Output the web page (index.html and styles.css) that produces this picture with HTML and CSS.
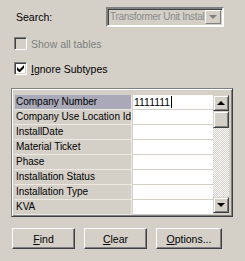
FILE: index.html
```html
<!DOCTYPE html>
<html lang="en">
<head>
<meta charset="UTF-8">
<title>Search</title>
<link rel="stylesheet" href="styles.css">
</head>
<body>

<div class="dialog">
  <div class="search-row">
    <span class="search-label">Search:</span>
    <div class="combo disabled">
      <span class="combo-text">Transformer Unit Instal</span>
      <span class="combo-btn"><span class="arrow-down"></span></span>
    </div>
  </div>

  <label class="check disabled"><span class="box"></span>Show all tables</label>
  <label class="check"><span class="box">
    <svg width="7" height="7" viewBox="0 0 7 7"><path d="M0 2v3l2 2h1l4-4V0L2.5 4.5z" fill="#000"/></svg>
  </span><span><u>I</u>gnore Subtypes</span></label>

  <div class="panel">
    <div class="grid">
      <div class="rows">
        <div class="row selected"><div class="name">Company Number</div><div class="value">1111111<span class="caret"></span></div></div>
        <div class="row"><div class="name">Company Use Location Id</div><div class="value"></div></div>
        <div class="row"><div class="name">InstallDate</div><div class="value"></div></div>
        <div class="row"><div class="name">Material Ticket</div><div class="value"></div></div>
        <div class="row"><div class="name">Phase</div><div class="value"></div></div>
        <div class="row"><div class="name">Installation Status</div><div class="value"></div></div>
        <div class="row"><div class="name">Installation Type</div><div class="value"></div></div>
        <div class="row"><div class="name">KVA</div><div class="value"></div></div>
      </div>
      <div class="scrollbar">
        <div class="sb-btn"><span class="arrow-up"></span></div>
        <div class="sb-thumb"></div>
        <div class="sb-track"></div>
        <div class="sb-btn"><span class="arrow-down"></span></div>
      </div>
    </div>
  </div>

  <div class="buttons">
    <button class="btn"><u>F</u>ind</button>
    <button class="btn"><u>C</u>lear</button>
    <button class="btn"><u>O</u>ptions...</button>
  </div>
</div>

</body>
</html>
```

FILE: styles.css
```css
/* classic dialog look */
body {
  margin: 0;
  background: #d4d0c8;
  font-family: "Liberation Sans", Arial, sans-serif;
  font-size: 10.5px;
  color: #000;
}

.dialog {
  width: 245px;
  height: 261px;
  padding: 7px 0 0 0;
  box-sizing: border-box;
}

.search-row {
  display: flex;
  align-items: center;
  height: 20px;
}

.search-label {
  margin-left: 16px;
  width: 90px;
}

.combo {
  display: flex;
  width: 118px;
  height: 20px;
  box-sizing: border-box;
  border: 2px solid;
  border-color: #808080 #ffffff #ffffff #808080;
  box-shadow: inset 1px 1px 0 #404040;
  background: #d4d0c8;
  color: #8a8a8a;
}

.combo-text {
  flex: 1;
  padding: 2px 0 0 2px;
  font-size: 10px;
  letter-spacing: -0.3px;
  white-space: nowrap;
  overflow: hidden;
}

.combo-btn {
  width: 16px;
  margin: 1px 1px 1px 0;
  box-sizing: border-box;
  border: 1px solid;
  border-color: #ffffff #808080 #808080 #ffffff;
  display: flex;
  align-items: center;
  justify-content: center;
}

.combo-btn .arrow-down {
  border-top-color: #808080;
}

.arrow-down {
  width: 0;
  height: 0;
  border-left: 4px solid transparent;
  border-right: 4px solid transparent;
  border-top: 4px solid #000;
}

.arrow-up {
  width: 0;
  height: 0;
  border-left: 4px solid transparent;
  border-right: 4px solid transparent;
  border-bottom: 4px solid #000;
}

.check {
  display: flex;
  align-items: center;
  margin-left: 14px;
  height: 13px;
}

.check.disabled {
  margin-top: 10px;
  color: #808080;
}

.check + .check {
  margin-top: 12px;
}

.box {
  width: 13px;
  height: 13px;
  box-sizing: border-box;
  border: 1px solid;
  border-color: #808080 #ffffff #ffffff #808080;
  box-shadow: inset 1px 1px 0 #404040, inset -1px -1px 0 #d4d0c8;
  background: #fff;
  margin-right: 4px;
  display: flex;
  align-items: center;
  justify-content: center;
}

.check.disabled .box {
  background: #d4d0c8;
}

.panel {
  margin: 13px 0 0 11px;
  width: 222px;
  height: 129px;
  box-sizing: border-box;
  border: 1px solid;
  border-color: #808080 #404040 #404040 #808080;
  box-shadow: inset 1px 1px 0 #ffffff, inset -1px -1px 0 #808080;
  padding: 6px 3px 0 3px;
}

.grid {
  display: flex;
  height: 118px;
}

.rows {
  width: 199px;
}

.row {
  display: flex;
  height: 15px;
}

.name {
  width: 117px;
  padding-left: 1px;
  box-sizing: border-box;
  border-bottom: 1px solid #ece9e2;
  border-right: 1px solid #ece9e2;
  line-height: 14px;
  font-size: 10px;
  white-space: nowrap;
  overflow: hidden;
}

.row.selected .name {
  background: #a9a9b8;
}

.value {
  flex: 1;
  background: #fff;
  border-bottom: 1px solid #d4d0c8;
  margin-left: 1px;
  line-height: 14px;
  padding-left: 1px;
  display: flex;
  align-items: center;
}

.caret {
  width: 1px;
  height: 12px;
  background: #000;
  margin-left: 1px;
}

.scrollbar {
  width: 16px;
  display: flex;
  flex-direction: column;
}

.sb-btn, .sb-thumb {
  height: 16px;
  box-sizing: border-box;
  background: #d4d0c8;
  border: 1px solid;
  border-color: #d4d0c8 #404040 #404040 #d4d0c8;
  box-shadow: inset 1px 1px 0 #ffffff, inset -1px -1px 0 #808080;
  display: flex;
  align-items: center;
  justify-content: center;
}

.sb-thumb {
  height: 17px;
}

.sb-track {
  flex: 1;
  background: repeating-conic-gradient(#ffffff 0 25%, #d4d0c8 0 50%) 0 0 / 2px 2px;
}

.buttons {
  display: flex;
  gap: 9px;
  margin: 11px 0 0 12px;
}

.btn {
  height: 21px;
  padding: 0;
  font: inherit;
  color: #000;
  background: #d4d0c8;
  border: 1px solid;
  border-color: #ffffff #404040 #404040 #ffffff;
  box-shadow: inset -1px -1px 0 #808080;
}

.btn:nth-child(1) { width: 63px; }
.btn:nth-child(2) { width: 63px; }
.btn:nth-child(3) { width: 66px; }
```
